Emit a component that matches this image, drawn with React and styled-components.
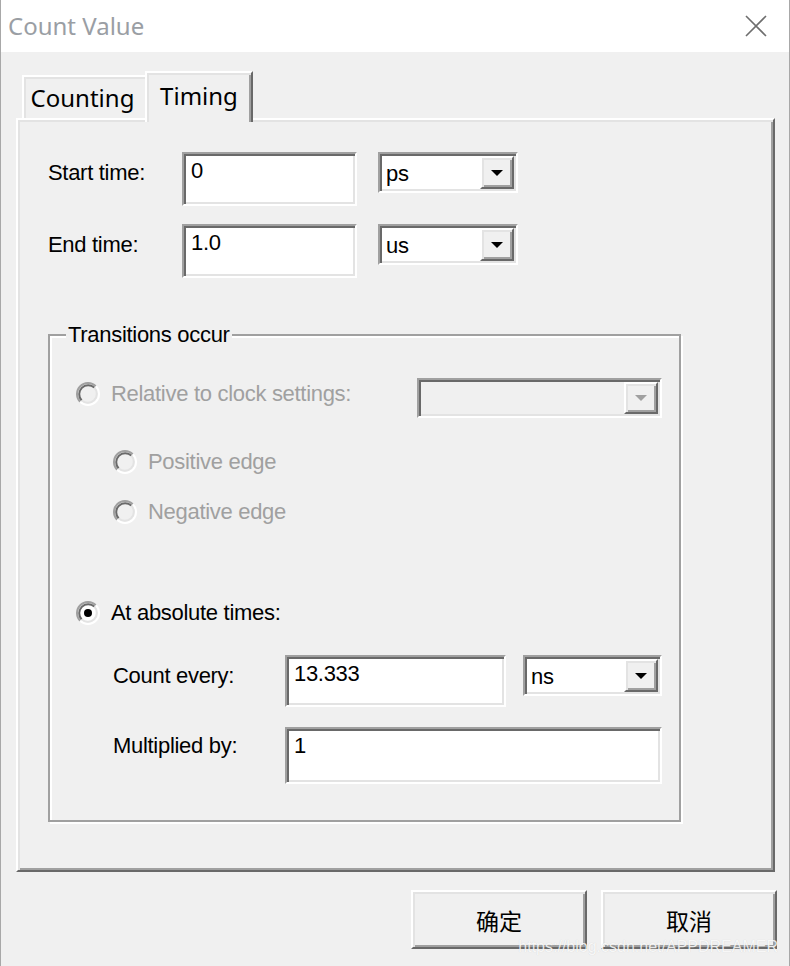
import styled, { createGlobalStyle, css } from 'styled-components'

/**
 * Classic Win32 dialog, scaled 2x
 */
const GlobalStyle = createGlobalStyle`
  html, body {
    margin: 0;
    padding: 0;
    background: #f0f0f0;
  }
  #root {
    width: 790px;
    height: 966px;
  }
`;

const LABEL_FONT = `"Liberation Sans", Arial, sans-serif`;
const UI_FONT = `"Noto Sans", "Open Sans", sans-serif`;

const sunken = css`
  border: 2px solid;
  border-color: #a0a0a0 #fff #fff #a0a0a0;
  box-shadow: inset 2px 2px 0 #696969, inset -2px -2px 0 #e3e3e3;
`;

const raised = css`
  border: 2px solid;
  border-color: #fff #696969 #696969 #fff;
  box-shadow: inset 2px 2px 0 #e3e3e3, inset -2px -2px 0 #a0a0a0;
`;

const Window = styled.div`
  position: relative;
  width: 790px;
  height: 966px;
  box-sizing: border-box;
  border-left: 1px solid #a8a8a8;
  border-right: 1px solid #a8a8a8;
  background: #f0f0f0;
  font-family: ${LABEL_FONT};
  font-size: 22px;
  letter-spacing: -0.3px;
  color: #000;
  overflow: hidden;
`;

const TitleBar = styled.header`
  height: 52px;
  background: #fff;
  display: flex;
  align-items: center;
  justify-content: space-between;
  padding: 0 22px 0 7px;
  box-sizing: border-box;
`;

const Title = styled.h1`
  margin: 0;
  font-family: ${UI_FONT};
  font-weight: normal;
  font-size: 24px;
  letter-spacing: 0;
  line-height: 1;
  color: #9a9ea4;
`;

const Body = styled.div`
  padding: 19px 14px 0 15px;
`;

const TabStrip = styled.div`
  display: flex;
  align-items: flex-end;
  height: 47px;
  padding-left: 6px;
  position: relative;
  z-index: 1;
`;

const Tab = styled.div`
  box-sizing: border-box;
  display: flex;
  align-items: center;
  justify-content: center;
  font-family: ${UI_FONT};
  font-size: 24px;
  letter-spacing: 0;
  background: #f0f0f0;
  ${({ $active }) =>
    $active
      ? css`
          width: 108px;
          height: 51px;
          margin-bottom: -4px;
          border-style: solid;
          border-width: 2px 2px 0 2px;
          border-color: #fff #696969 transparent #fff;
          box-shadow: inset 2px 2px 0 #e3e3e3, inset -2px 0 0 #a0a0a0;
          padding-bottom: 4px;
        `
      : css`
          width: 123px;
          height: 43px;
          border-top: 2px solid #fff;
          border-left: 2px solid #fff;
          box-shadow: inset 2px 2px 0 #e3e3e3;
          padding-right: 4px;
        `}
`;

const Panel = styled.section`
  ${raised};
  height: 754px;
  box-sizing: border-box;
  padding: 32px 0 0 30px;
`;

const FormGrid = styled.div`
  display: grid;
  grid-template-columns: ${({ $cols }) => $cols};
  column-gap: ${({ $gap }) => $gap}px;
  align-items: start;
  margin-top: ${({ $top }) => $top || 0}px;
  margin-left: ${({ $indent }) => $indent || 0}px;
`;

const Label = styled.div`
  line-height: 24px;
  padding-top: ${({ $top }) => $top}px;
  white-space: nowrap;
`;

const TextBox = styled.div`
  ${sunken};
  box-sizing: border-box;
  height: ${({ $h }) => $h}px;
  padding: 5px 7px;
  background: #fff;
  line-height: 24px;
`;

const Combo = styled.div`
  ${sunken};
  box-sizing: border-box;
  display: flex;
  height: ${({ $h }) => $h || 41}px;
  padding: 2px;
  background: ${({ $disabled }) => ($disabled ? '#f0f0f0' : '#fff')};
`;

const ComboText = styled.div`
  flex: 1;
  display: flex;
  align-items: center;
  padding: 3px 0 0 4px;
  line-height: 24px;
`;

const ComboButton = styled.div`
  ${raised};
  box-sizing: border-box;
  width: 34px;
  display: flex;
  align-items: center;
  justify-content: center;
  background: #f0f0f0;
  &::after {
    content: '';
    border-left: 6px solid transparent;
    border-right: 6px solid transparent;
    border-top: 6px solid ${({ $disabled }) => ($disabled ? '#a0a0a0' : '#000')};
  }
`;

const Group = styled.fieldset`
  margin: 45px 0 0 0;
  width: 633px;
  min-width: 0;
  box-sizing: border-box;
  border: 2px solid #a0a0a0;
  box-shadow: inset 2px 2px 0 #fff, 2px 2px 0 #fff;
  padding: 31px 17px 36px 26px;
`;

const Legend = styled.legend`
  margin-left: -10px;
  padding: 0 2px;
  line-height: 24px;
  background: #f0f0f0;
`;

const OptionRow = styled.div`
  display: flex;
  justify-content: space-between;
  align-items: flex-start;
  margin-top: ${({ $top }) => $top || 0}px;
`;

const Option = styled.label`
  display: flex;
  align-items: center;
  gap: 11px;
  height: 24px;
  line-height: 24px;
  margin-left: ${({ $indent }) => $indent || 0}px;
  margin-top: ${({ $top }) => $top || 0}px;
  color: ${({ $disabled }) => ($disabled ? '#a0a0a0' : '#000')};
`;

const DisabledCombo = styled.div`
  width: 245px;
`;

const ButtonRow = styled.div`
  display: flex;
  justify-content: flex-end;
  gap: 14px;
  margin: 18px -2px 0 0;
`;

const DialogButton = styled.button`
  ${raised};
  box-sizing: border-box;
  width: 176px;
  height: 59px;
  padding: 0;
  background: #f0f0f0;
  font-family: "Noto Sans CJK SC", sans-serif;
  font-size: 23px;
  color: #000;
`;

const Watermark = styled.div`
  position: absolute;
  right: 11px;
  bottom: 10px;
  font-family: "Liberation Sans", Arial, sans-serif;
  font-size: 16px;
  letter-spacing: 0;
  color: rgba(255, 255, 255, 0.85);
  text-shadow: 0 0 1px rgba(0, 0, 0, 0.15);
  pointer-events: none;
`;

const Radio = ({ checked, disabled }) => (
  <svg width="24" height="24" viewBox="0 0 24 24">
    <circle cx="12" cy="12" r="9" fill={disabled ? '#f0f0f0' : '#fff'} />
    <path d="M4.22 19.78 A11 11 0 0 1 19.78 4.22" stroke="#a0a0a0" strokeWidth="2" fill="none" />
    <path d="M19.78 4.22 A11 11 0 0 1 4.22 19.78" stroke="#fff" strokeWidth="2" fill="none" />
    <path d="M5.64 18.36 A9 9 0 0 1 18.36 5.64" stroke="#696969" strokeWidth="2" fill="none" />
    <path d="M18.36 5.64 A9 9 0 0 1 5.64 18.36" stroke="#e3e3e3" strokeWidth="2" fill="none" />
    {checked && <circle cx="12" cy="12" r="4" fill="#000" />}
  </svg>
)

const CloseIcon = () => (
  <svg width="22" height="22" viewBox="0 0 22 22">
    <path d="M1 1 L21 21 M21 1 L1 21" stroke="#6e6e6e" strokeWidth="1.6" fill="none" />
  </svg>
)

const Select = ({ value, disabled, h }) => (
  <Combo $disabled={disabled} $h={h}>
    <ComboText>{value}</ComboText>
    <ComboButton $disabled={disabled} />
  </Combo>
)

const App = () => {
  return (
    <Window>
      <GlobalStyle />
      <TitleBar>
        <Title>Count Value</Title>
        <CloseIcon />
      </TitleBar>
      <Body>
        <TabStrip>
          <Tab>Counting</Tab>
          <Tab $active>Timing</Tab>
        </TabStrip>
        <Panel>
          <FormGrid $cols="113px 175px 140px" $gap={21}>
            <Label $top={9}>Start time:</Label>
            <TextBox $h={54}>0</TextBox>
            <Select value="ps" />
          </FormGrid>
          <FormGrid $cols="113px 175px 140px" $gap={21} $top={18}>
            <Label $top={9}>End time:</Label>
            <TextBox $h={54}>1.0</TextBox>
            <Select value="us" />
          </FormGrid>

          <Group>
            <Legend>Transitions occur</Legend>
            <OptionRow>
              <Option $disabled $top={4}>
                <Radio disabled />
                Relative to clock settings:
              </Option>
              <DisabledCombo>
                <Select value="" disabled h={40} />
              </DisabledCombo>
            </OptionRow>
            <Option $disabled $indent={37} $top={32}>
              <Radio disabled />
              Positive edge
            </Option>
            <Option $disabled $indent={37} $top={26}>
              <Radio disabled />
              Negative edge
            </Option>
            <Option $top={77}>
              <Radio checked />
              At absolute times:
            </Option>
            <FormGrid $cols="155px 221px 139px" $gap={17} $top={30} $indent={37}>
              <Label $top={9}>Count every:</Label>
              <TextBox $h={52}>13.333</TextBox>
              <Select value="ns" />
            </FormGrid>
            <FormGrid $cols="172px 377px" $gap={0} $top={20} $indent={37}>
              <Label $top={7}>Multiplied by:</Label>
              <TextBox $h={57}>1</TextBox>
            </FormGrid>
          </Group>
        </Panel>
        <ButtonRow>
          <DialogButton>确定</DialogButton>
          <DialogButton>取消</DialogButton>
        </ButtonRow>
      </Body>
      <Watermark>https://blog.csdn.net/APPDREAMER</Watermark>
    </Window>
  )
}

export default App
